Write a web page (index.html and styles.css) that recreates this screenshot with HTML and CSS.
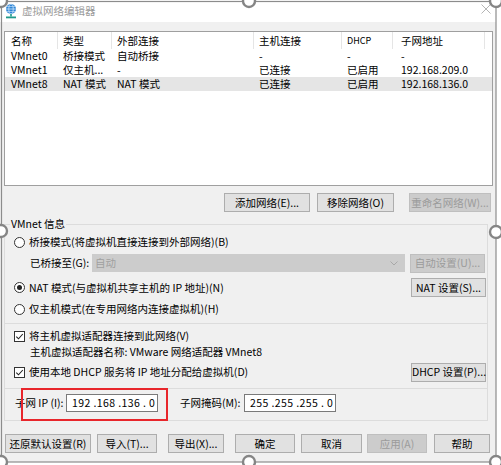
FILE: index.html
```html
<!DOCTYPE html>
<html lang="zh-CN">
<head>
<meta charset="utf-8">
<title>虚拟网络编辑器</title>
<link rel="stylesheet" href="styles.css">
</head>
<body>
<div class="screen">
  <div class="dlg">
    <div class="titlebar">
      <svg class="appicon" width="14" height="16" viewBox="0 0 14 16">
        <circle cx="7" cy="6" r="5" fill="#2f86d6"/>
        <ellipse cx="7" cy="6" rx="2.2" ry="5" fill="none" stroke="#cfe6fb" stroke-width="0.8"/>
        <line x1="2" y1="6" x2="12" y2="6" stroke="#cfe6fb" stroke-width="0.8"/>
        <line x1="2.8" y1="3.5" x2="11.2" y2="3.5" stroke="#cfe6fb" stroke-width="0.6"/>
        <line x1="2.8" y1="8.5" x2="11.2" y2="8.5" stroke="#cfe6fb" stroke-width="0.6"/>
        <rect x="6.2" y="11" width="1.6" height="2.5" fill="#1f9a8a"/>
        <rect x="2" y="13.5" width="10" height="1.8" fill="#1f9a8a"/>
      </svg>
      <span class="title">虚拟网络编辑器</span>
      <svg class="close" width="10" height="10" viewBox="0 0 10 10">
        <path d="M0.5 0.5 L9.5 9.5 M9.5 0.5 L0.5 9.5" stroke="#b4b4b4" stroke-width="1" fill="none"/>
      </svg>
    </div>

    <div class="main">
      <div class="list">
        <div class="lrow head">
          <div class="c c1">名称</div>
          <div class="c c2">类型</div>
          <div class="c c3">外部连接</div>
          <div class="c c4">主机连接</div>
          <div class="c c5 small">DHCP</div>
          <div class="c c6">子网地址</div>
          <div class="c c7"></div>
        </div>
        <div class="lrow">
          <div class="c c1">VMnet0</div>
          <div class="c c2">桥接模式</div>
          <div class="c c3">自动桥接</div>
          <div class="c c4">-</div>
          <div class="c c5">-</div>
          <div class="c c6">-</div>
          <div class="c c7"></div>
        </div>
        <div class="lrow">
          <div class="c c1">VMnet1</div>
          <div class="c c2">仅主机...</div>
          <div class="c c3">-</div>
          <div class="c c4">已连接</div>
          <div class="c c5">已启用</div>
          <div class="c c6">192.168.209.0</div>
          <div class="c c7"></div>
        </div>
        <div class="lrow sel">
          <div class="c c1">VMnet8</div>
          <div class="c c2">NAT 模式</div>
          <div class="c c3">NAT 模式</div>
          <div class="c c4">已连接</div>
          <div class="c c5">已启用</div>
          <div class="c c6">192.168.136.0</div>
          <div class="c c7"></div>
        </div>
      </div>

      <div class="netbtns">
        <button class="btn w-add">添加网络(E)...</button>
        <button class="btn w-del">移除网络(O)</button>
        <button class="btn dis w-ren">重命名网络(W)...</button>
      </div>

      <fieldset class="group">
        <legend>VMnet 信息</legend>
        <div class="row r1">
          <span class="radio"></span>
          <span>桥接模式(将虚拟机直接连接到外部网络)(B)</span>
        </div>
        <div class="row r2">
          <span class="lbl-bridge">已桥接至(G):</span>
          <div class="select">
            <span>自动</span>
            <svg class="chev" width="8" height="5" viewBox="0 0 8 5"><path d="M0.5 0.5 L4 4 L7.5 0.5" stroke="#a8a8a8" stroke-width="1" fill="none"/></svg>
          </div>
          <button class="btn dis w-side">自动设置(U)...</button>
        </div>
        <div class="row r3">
          <span class="radio on"></span>
          <span>NAT 模式(与虚拟机共享主机的 IP 地址)(N)</span>
          <button class="btn w-side push">NAT 设置(S)...</button>
        </div>
        <div class="row r4">
          <span class="radio"></span>
          <span>仅主机模式(在专用网络内连接虚拟机)(H)</span>
        </div>
        <div class="sep"></div>
        <div class="row r5">
          <svg class="check" width="11" height="11" viewBox="0 0 11 11"><rect x="0.5" y="0.5" width="10" height="10" fill="#fff" stroke="#333"/><path d="M2.3 5.6 L4.5 7.8 L8.8 3" stroke="#222" stroke-width="1.1" fill="none"/></svg>
          <span>将主机虚拟适配器连接到此网络(V)</span>
        </div>
        <div class="row r6">
          <span>主机虚拟适配器名称: VMware 网络适配器 VMnet8</span>
        </div>
        <div class="row r7">
          <svg class="check" width="11" height="11" viewBox="0 0 11 11"><rect x="0.5" y="0.5" width="10" height="10" fill="#fff" stroke="#333"/><path d="M2.3 5.6 L4.5 7.8 L8.8 3" stroke="#222" stroke-width="1.1" fill="none"/></svg>
          <span>使用本地 DHCP 服务将 IP 地址分配给虚拟机(D)</span>
          <button class="btn w-side push">DHCP 设置(P)...</button>
        </div>
        <div class="sep sep2"></div>
        <div class="row r8">
          <span class="lbl-ip">子网 IP (I):</span>
          <div class="ipbox">192 .168 .136 . 0</div>
          <span class="lbl-mask">子网掩码(M):</span>
          <div class="ipbox">255 .255 .255 . 0</div>
        </div>
      </fieldset>

      <div class="bottombtns">
        <button class="btn w-reset">还原默认设置(R)</button>
        <button class="btn w-imp">导入(T)...</button>
        <button class="btn w-exp">导出(X)...</button>
        <button class="btn w-ok">确定</button>
        <button class="btn w-cancel">取消</button>
        <button class="btn dis w-apply">应用(A)</button>
        <button class="btn w-help">帮助</button>
      </div>
    </div>

    <div class="redbox"></div>
  </div>

  <svg class="frame" width="501" height="465" viewBox="0 0 501 465">
    <rect x="1.5" y="1.5" width="494.5" height="460.5" fill="none" stroke="#8c8c8c" stroke-width="1.2"/>
    <g fill="#ffffff" stroke="#858585" stroke-width="2.4">
      <circle cx="1" cy="1" r="6"/>
      <circle cx="249" cy="1" r="6"/>
      <circle cx="496" cy="1" r="6"/>
      <circle cx="1" cy="231" r="6"/>
      <circle cx="496" cy="232" r="6"/>
      <circle cx="1" cy="462" r="6"/>
      <circle cx="249" cy="462" r="6"/>
      <circle cx="496" cy="462" r="6"/>
    </g>
  </svg>
</div>
</body>
</html>
```

FILE: styles.css
```css
* { box-sizing: border-box; }

html, body {
  margin: 0;
  padding: 0;
  background: #ffffff;
}

body {
  font-family: "Noto Sans CJK SC", "Noto Sans", sans-serif;
  font-size: 10.5px;
  line-height: 14px;
  color: #000;
}

.screen {
  position: relative;
  width: 501px;
  height: 465px;
  overflow: hidden;
  background: #ffffff;
}

.dlg {
  position: relative;
  width: 496px;
  height: 462px;
  background: #f0f0f0;
}

/* title bar */
.titlebar {
  height: 22px;
  background: #ffffff;
  display: flex;
  align-items: center;
  padding-left: 4px;
}
.appicon { display: block; flex: none; }
.title {
  margin-left: 4px;
  color: #9a9a9a;
  font-size: 10.5px;
}
.close {
  margin-left: auto;
  margin-right: 5px;
  margin-top: -4px;
  display: block;
}

/* main area */
.main {
  padding: 9px 3px 0 4px;
}

.list {
  height: 155px;
  background: #ffffff;
  border: 1px solid #9f9f9f;
}

.lrow {
  display: grid;
  grid-template-columns: 53px 54px 142px 88px 51px 92px 1fr;
  height: 14px;
  align-items: center;
  white-space: nowrap;
}
.lrow.head {
  height: 17px;
}
.lrow.head .c {
  height: 17px;
  border-right: 1px solid #e5e5e5;
  display: flex;
  align-items: center;
}
.lrow.head .c7 { border-right: none; }
.lrow.sel { background: #e5e5e5; }

.c {
  padding-left: 5px;
  overflow: hidden;
}
.c1 { padding-left: 6px; }
.c6 { padding-left: 8px; }
.small { font-size: 9px; }

/* buttons */
.btn {
  font-family: inherit;
  font-size: 10.5px;
  line-height: 14px;
  height: 19px;
  padding: 0;
  margin: 0;
  color: #000;
  background: #e1e1e1;
  border: 1px solid #adadad;
  border-radius: 0;
  white-space: nowrap;
  flex: none;
}
.btn.dis {
  background: #cccccc;
  border-color: #bfbfbf;
  color: #9b9b9b;
}

.netbtns {
  display: flex;
  justify-content: flex-end;
  margin-top: 7px;
  padding-right: 2px;
}
.w-add { width: 86px; }
.w-del { width: 77px; margin-left: 7px; }
.w-ren { width: 82px; margin-left: 15px; }

/* group box */
.group {
  margin: 5px 5px 0 0;
  padding: 0 0 7px 0;
  min-width: 0;
  border: 1px solid #dcdcdc;
}
.group legend {
  margin-left: 5px;
  padding: 0 1px;
  line-height: 14px;
  color: #000;
}

.row {
  display: flex;
  align-items: center;
  padding-left: 9px;
  padding-right: 1px;
  white-space: nowrap;
}
.r1 { height: 22px; }
.r2 { height: 20px; padding-left: 25px; }
.r3 { height: 29px; }
.r4 { height: 14px; }
.r5 { height: 14px; margin-top: 5px; }
.r6 { height: 14px; margin-top: 2px; padding-left: 25px; }
.r7 { height: 20px; margin-top: 3px; }
.r8 { height: 20px; margin-top: 4px; padding-left: 10px; }

.sep {
  height: 1px;
  background: #dcdcdc;
  margin-top: 7px;
}
.sep2 { margin-top: 6px; }

.radio {
  position: relative;
  width: 11px;
  height: 11px;
  border: 1px solid #333333;
  border-radius: 50%;
  background: #ffffff;
  margin-right: 4px;
  flex: none;
}
.radio.on::after {
  content: "";
  position: absolute;
  left: 2px;
  top: 2px;
  width: 5px;
  height: 5px;
  border-radius: 50%;
  background: #222222;
}

.check {
  display: block;
  flex: none;
  margin-right: 4px;
}

.lbl-bridge { width: 62px; flex: none; }
.select {
  width: 313px;
  height: 18px;
  background: #cccccc;
  border: 1px solid #cccccc;
  display: flex;
  align-items: center;
  padding-left: 2px;
  padding-right: 6px;
  color: #a0a0a0;
  flex: none;
}
.chev { margin-left: auto; display: block; }
.w-side { width: 75px; margin-left: 5px; }
.push { margin-left: auto; }

.lbl-ip { width: 51px; flex: none; }
.lbl-mask { width: 64px; flex: none; margin-left: 22px; }
.ipbox {
  width: 92px;
  height: 18px;
  background: #ffffff;
  border: 1px solid #7a7a7a;
  display: flex;
  align-items: center;
  padding-left: 5px;
  flex: none;
  white-space: pre;
  letter-spacing: 0.4px;
}

.bottombtns {
  display: flex;
  margin-top: 13px;
  padding-left: 1px;
}
.w-reset { width: 86px; }
.w-imp { width: 60px; margin-left: 6px; }
.w-exp { width: 56px; margin-left: 11px; }
.w-ok { width: 60px; margin-left: 11px; }
.w-cancel { width: 61px; margin-left: 6px; }
.w-apply { width: 60px; margin-left: 5px; }
.w-help { width: 56px; margin-left: 7px; }

/* annotation rectangle drawn over the dialog */
.redbox {
  position: absolute;
  left: 21px;
  top: 388px;
  width: 147px;
  height: 33px;
  border: 2px solid #e8262b;
  pointer-events: none;
}

/* screenshot-tool selection frame with handles */
.frame {
  position: absolute;
  left: 0;
  top: 0;
  pointer-events: none;
}
```
